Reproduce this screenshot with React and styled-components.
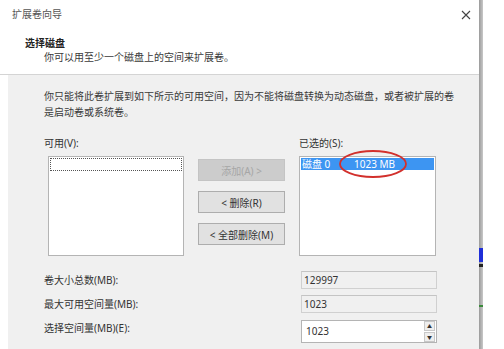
import styled, { createGlobalStyle } from "styled-components";

const GlobalStyle = createGlobalStyle`
    html, body {
        margin: 0;
        padding: 0;
        background: #ffffff;
    }
    body {
        font-family: "Noto Sans", "Noto Sans CJK SC", sans-serif;
        font-size: 10px;
        color: #333333;
    }
`;

export default function App() {
    return (
        <>
            <GlobalStyle />
            <Screen>
                <Dialog>
                    <Header>
                        <TitleRow>
                            <Title>扩展卷向导</Title>
                            <CloseButton>
                                <svg width="10" height="10" viewBox="0 0 10 10">
                                    <path d="M1 1 L9 9 M9 1 L1 9" stroke="#444" strokeWidth="1.1" />
                                </svg>
                            </CloseButton>
                        </TitleRow>
                        <PageTitle>选择磁盘</PageTitle>
                        <PageSubtitle>你可以用至少一个磁盘上的空间来扩展卷。</PageSubtitle>
                    </Header>

                    <Body>
                        <Description>
                            你只能将此卷扩展到如下所示的可用空间，因为不能将磁盘转换为动态磁盘，或者被扩展的卷
                            <br />
                            是启动卷或系统卷。
                        </Description>

                        <Picker>
                            <Column>
                                <Label>可用(V):</Label>
                                <ListBox $inset>
                                    <FocusRow />
                                </ListBox>
                            </Column>

                            <Buttons>
                                <Button disabled>添加(A) &gt;</Button>
                                <Button>&lt; 删除(R)</Button>
                                <Button>&lt; 全部删除(M)</Button>
                            </Buttons>

                            <Column>
                                <Label>已选的(S):</Label>
                                <ListBox>
                                    <SelectedRow>
                                        <DiskName>磁盘 0</DiskName>
                                        <span>1023 MB</span>
                                    </SelectedRow>
                                    <Circle width="70" height="30" viewBox="0 0 70 30">
                                        <ellipse cx="35" cy="15" rx="33" ry="13" fill="none" stroke="#d2302c" strokeWidth="1.8" />
                                    </Circle>
                                </ListBox>
                            </Column>
                        </Picker>

                        <Fields>
                            <FieldLabel>卷大小总数(MB):</FieldLabel>
                            <ReadOnlyField>129997</ReadOnlyField>
                            <FieldLabel>最大可用空间量(MB):</FieldLabel>
                            <ReadOnlyField>1023</ReadOnlyField>
                            <FieldLabel>选择空间量(MB)(E):</FieldLabel>
                            <SpinField>
                                <span>1023</span>
                                <Spinner>
                                    <SpinArrow>▲</SpinArrow>
                                    <SpinArrow>▼</SpinArrow>
                                </Spinner>
                            </SpinField>
                        </Fields>
                    </Body>
                </Dialog>

                <SideStrip>
                    <ScrollBar>
                        <Mark $top={248} $height={14} $color="#1f2fd8" />
                        <Mark $top={264} $height={3} $color="#222" />
                        <Mark $top={305} $height={2} $color="#3a8a3a" />
                    </ScrollBar>
                </SideStrip>
            </Screen>
        </>
    );
}

const Screen = styled.div`
    width: 504px;
    height: 349px;
    display: flex;
    overflow: hidden;
`;

const Dialog = styled.div`
    width: 479px;
    display: flex;
    flex-direction: column;
    background: #ffffff;
`;

const Header = styled.div`
    height: 75px;
    box-sizing: border-box;
    border-bottom: 1px solid #d4d4d4;
    padding: 7px 0 0 12px;
`;

const TitleRow = styled.div`
    display: flex;
    justify-content: space-between;
    align-items: center;
    padding-right: 8px;
`;

const Title = styled.div`
    font-family: "Noto Sans CJK SC", sans-serif;
    color: #555555;
    line-height: 14px;
`;

const CloseButton = styled.div`
    display: flex;
    margin-top: 2px;
`;

const PageTitle = styled.div`
    margin: 15px 0 0 13px;
    font-weight: bold;
    color: #222222;
    line-height: 14px;
`;

const PageSubtitle = styled.div`
    margin: 0 0 0 32px;
    line-height: 14px;
    color: #3a3a3a;
`;

const Body = styled.div`
    flex: 1;
    margin-left: 8px;
    background: #f0f0f0;
    padding: 13px 0 0 36px;
`;

const Description = styled.div`
    line-height: 16px;
    color: #3a3a3a;
    white-space: nowrap;
`;

const Picker = styled.div`
    display: grid;
    grid-template-columns: 140px 87px 137px;
    column-gap: 14px;
    margin-top: 15px;
`;

const Column = styled.div`
    display: flex;
    flex-direction: column;
`;

const Label = styled.div`
    line-height: 16px;
    height: 16px;
    margin-bottom: 5px;
`;

const ListBox = styled.div`
    position: relative;
    height: 100px;
    margin-left: ${(p) => (p.$inset ? "4px" : "0")};
    box-sizing: border-box;
    border: 1px solid #b4b4b4;
    background: #ffffff;
    padding: 1px;
`;

const FocusRow = styled.div`
    height: 11px;
    border: 1px dotted #555555;
`;

const SelectedRow = styled.div`
    height: 12px;
    display: flex;
    align-items: center;
    background: #3d95f2;
    color: #ffffff;
    line-height: 12px;
    padding-left: 1px;
`;

const DiskName = styled.span`
    width: 52px;
`;

const Circle = styled.svg`
    position: absolute;
    left: 38px;
    top: -8px;
`;

const Buttons = styled.div`
    display: flex;
    flex-direction: column;
    gap: 10px;
    padding-top: 24px;
`;

const Button = styled.button`
    height: 22px;
    padding: 0;
    font-family: "Noto Sans", "Noto Sans CJK SC", sans-serif;
    font-size: 10px;
    color: ${(p) => (p.disabled ? "#a6a6a6" : "#333333")};
    background: ${(p) => (p.disabled ? "#cccccc" : "#e1e1e1")};
    border: 1px solid ${(p) => (p.disabled ? "#c4c4c4" : "#adadad")};
    border-radius: 0;
`;

const Fields = styled.div`
    display: grid;
    grid-template-columns: 257px 136px;
    grid-auto-rows: 24px;
    align-items: center;
    margin-top: 12px;
`;

const FieldLabel = styled.div`
    line-height: 14px;
`;

const ReadOnlyField = styled.div`
    height: 18px;
    box-sizing: border-box;
    border: 1px solid #d0d0d0;
    border-top-color: #c4c4c4;
    background: #f0f0f0;
    line-height: 16px;
    padding-left: 2px;
`;

const SpinField = styled.div`
    height: 23px;
    box-sizing: border-box;
    border: 1px solid #b4b4b4;
    background: #ffffff;
    display: flex;
    justify-content: space-between;
    align-items: center;
    padding: 0 1px 0 4px;
    margin-top: 6px;
`;

const Spinner = styled.div`
    display: flex;
    flex-direction: column;
    gap: 1px;
`;

const SpinArrow = styled.div`
    width: 9px;
    height: 8px;
    background: #eeeeee;
    border: 1px solid #c8c8c8;
    font-size: 5px;
    line-height: 8px;
    text-align: center;
    color: #333333;
`;

const SideStrip = styled.div`
    flex: 1;
    background: #ffffff;
`;

const ScrollBar = styled.div`
    position: relative;
    width: 4px;
    height: 100%;
    background: linear-gradient(90deg, #9a9a9a, #c8c8c8);
`;

const Mark = styled.div`
    position: absolute;
    left: 0;
    top: ${(p) => p.$top}px;
    width: 4px;
    height: ${(p) => p.$height}px;
    background: ${(p) => p.$color};
`;
